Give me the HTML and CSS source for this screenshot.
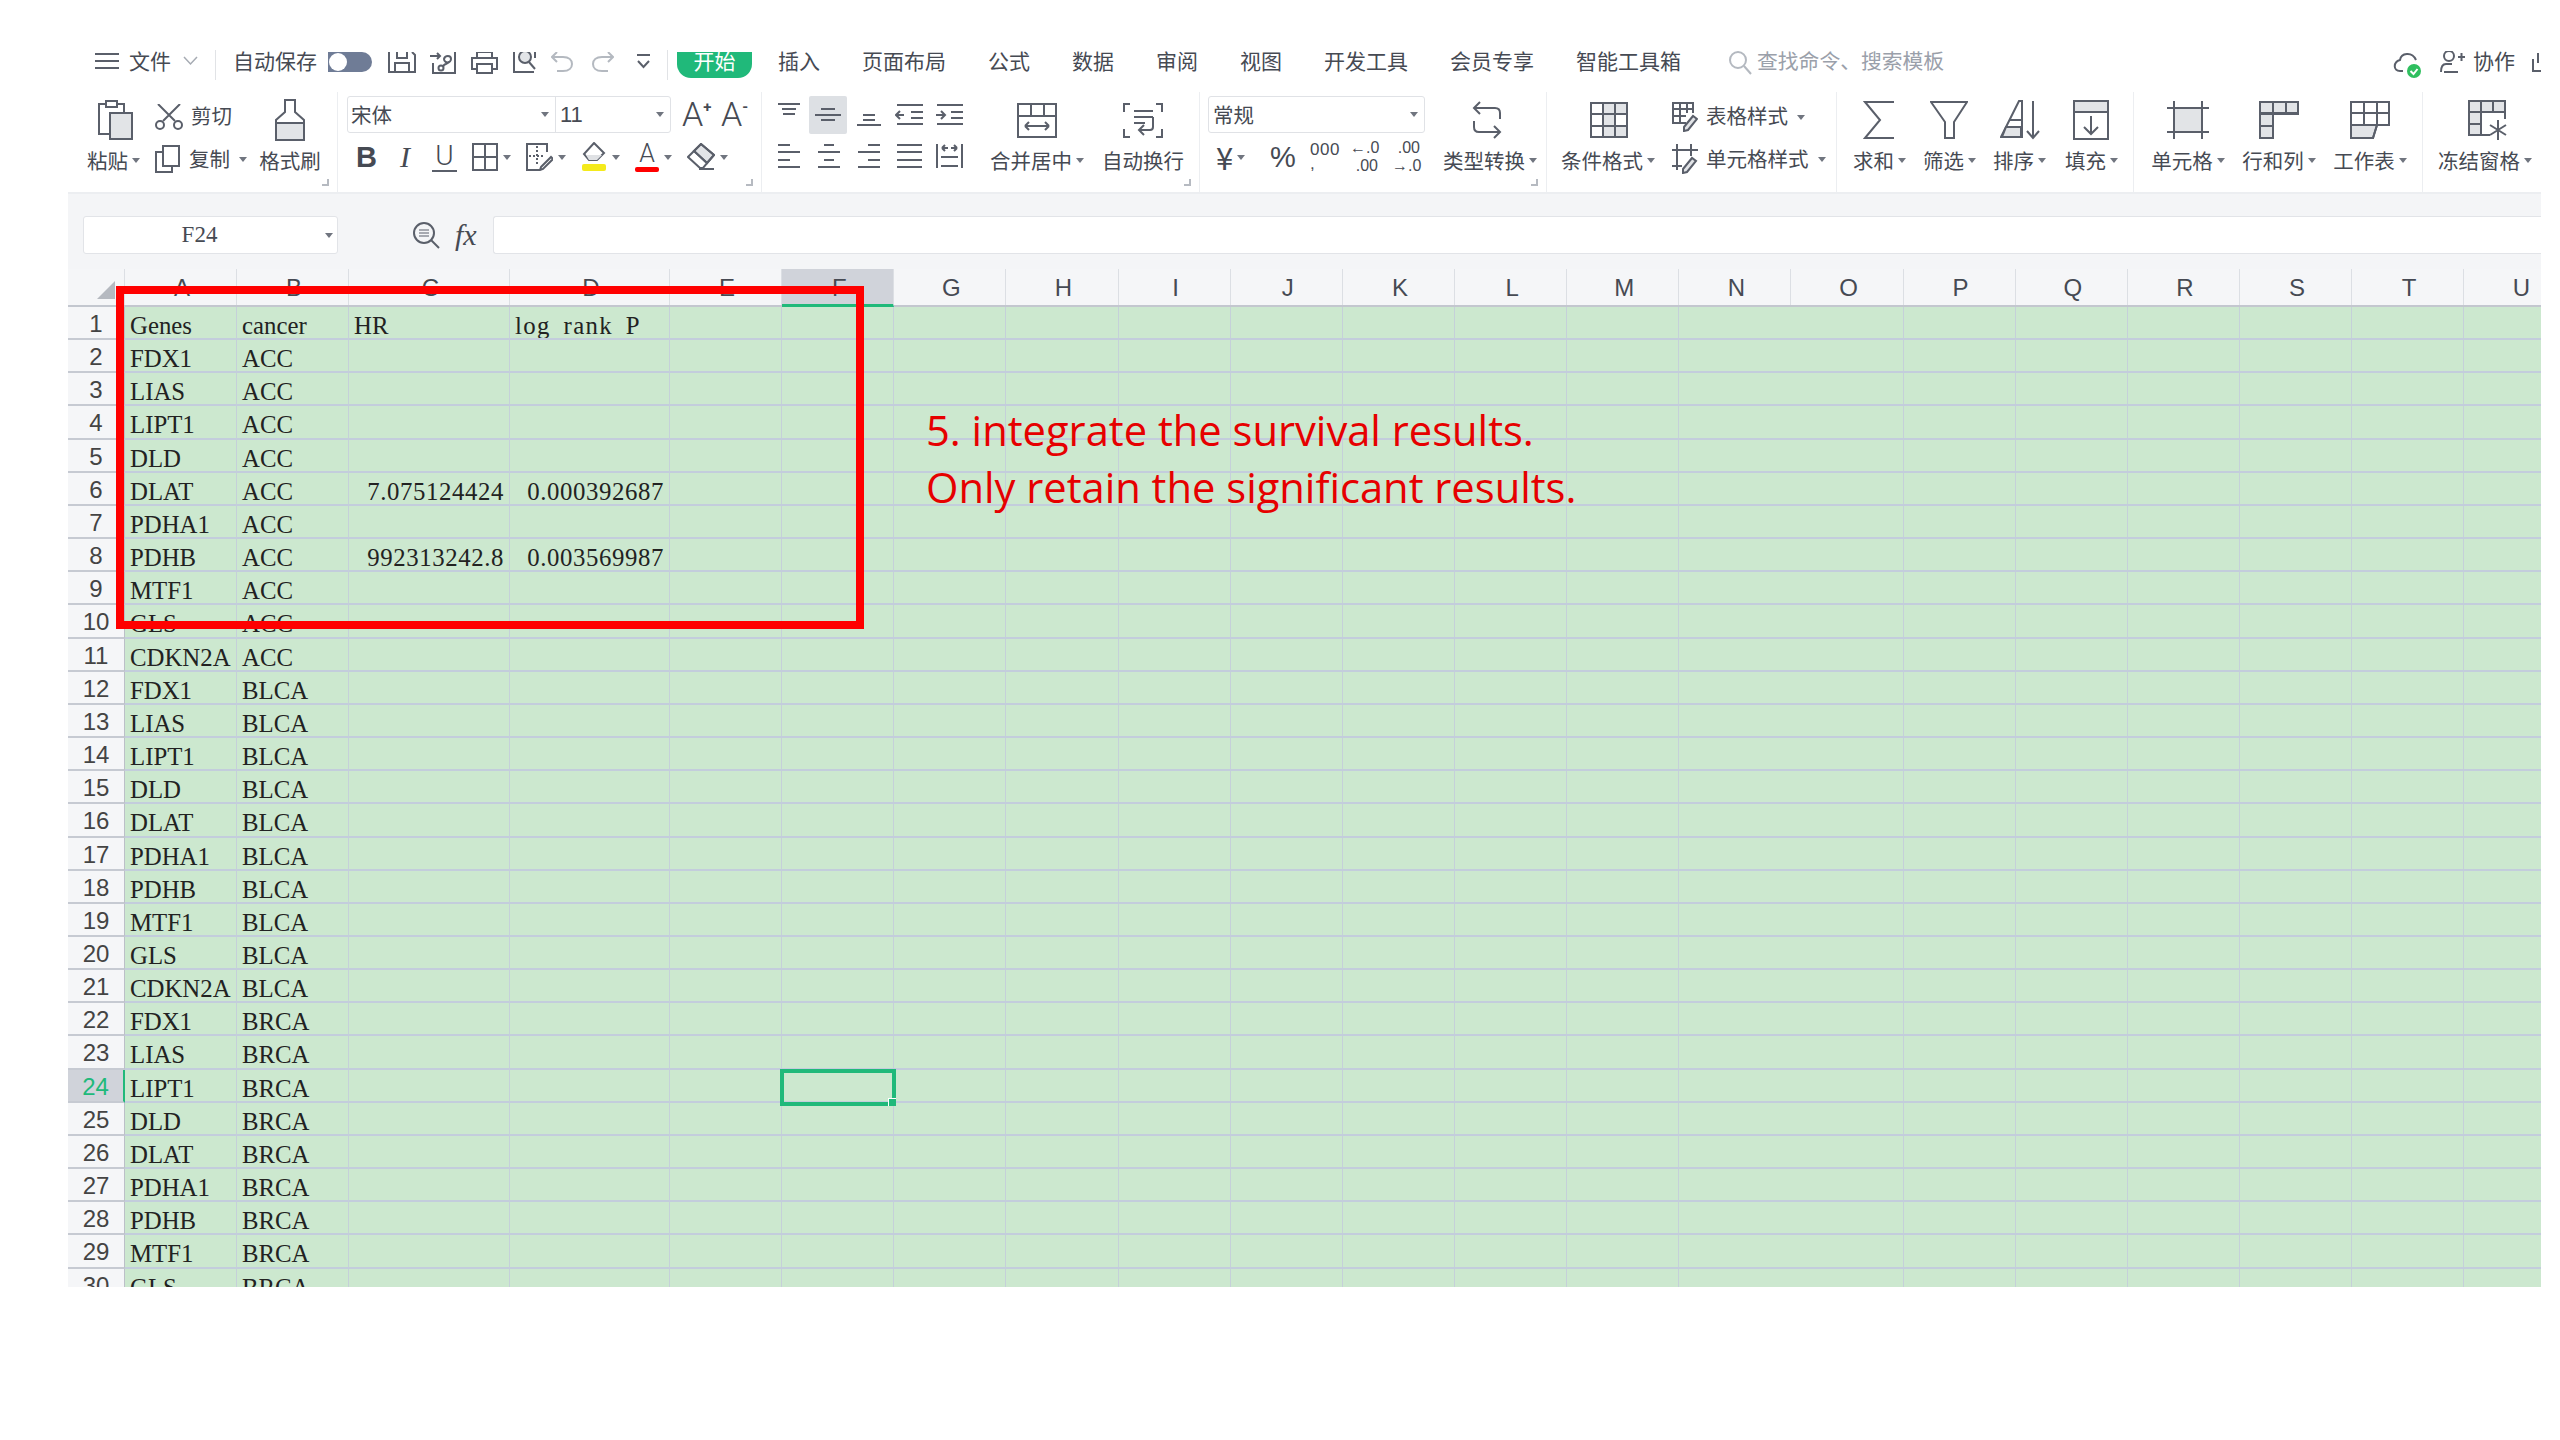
FILE: index.html
```html
<!DOCTYPE html>
<html lang="zh-CN">
<head>
  <meta charset="UTF-8">
  <title>WPS 表格</title>
  <link rel="stylesheet" href="styles.css">
</head>
<body>
<div class="app">

  <!-- Tab bar -->
  <div class="tabbar">
    <div class="file-menu">
      <svg class="ico" width="24" height="20" viewBox="0 0 24 20"><path d="M0 3h24M0 10h24M0 17h24"/></svg>
      <span>文件</span>
      <svg class="ico thin" width="15" height="20" viewBox="0 0 15 20"><path d="M1 6l6.500 7L14 6"/></svg>
    </div>
    <div class="quick">
      <span>自动保存</span>
      <div class="toggle"><i></i></div>
      <svg class="ico" width="28" height="22" viewBox="0 0 28 22"><path d="M1 0v20h26V3l-3-3M9 0v6h10V0M7 20V11h14v9"/></svg>
      <svg class="ico" width="27" height="22" viewBox="0 0 27 22"><path d="M0 4h10M7 1l3 3-3 3M3 11v10h22V0M13 15c0-4 8-3 8-8 0-4-6-4-7 0 0 3 3 4 5 3"/><circle cx="11" cy="16" r="2.500"/></svg>
      <svg class="ico" width="27" height="22" viewBox="0 0 27 22"><path d="M6 6V0h15v6M6 17H1V6h25v11h-5M6 12h15v9H6z"/></svg>
      <svg class="ico" width="25" height="22" viewBox="0 0 25 22"><path d="M2 0v20h20M23 0v6"/><circle class="f" cx="13" cy="5" r="6"/><path d="M17 10l6 7"/></svg>
      <svg class="ico pale" width="23" height="22" viewBox="0 0 23 22"><path d="M6 0L1 5l5 5M1 5h11c6 0 9 3 9 7s-3 7-9 7H6"/></svg>
      <svg class="ico pale redo" width="23" height="22" viewBox="0 0 23 22"><path d="M17 0l5 5-5 5M22 5H11C5 5 2 8 2 12s3 7 9 7h6"/></svg>
      <svg class="ico more" width="15" height="22" viewBox="0 0 15 22"><path d="M1 3h13M2 9l5.500 6L13 9"/></svg>
    </div>
    <div class="tabs">
      <span class="tab-active">开始</span>
      <span>插入</span>
      <span>页面布局</span>
      <span>公式</span>
      <span>数据</span>
      <span>审阅</span>
      <span>视图</span>
      <span>开发工具</span>
      <span>会员专享</span>
      <span>智能工具箱</span>
    </div>
    <div class="search">
      <svg class="ico pale" width="24" height="24" viewBox="0 0 24 24"><circle cx="10" cy="9" r="8"/><path d="M16 15l7 8"/></svg>
      <span>查找命令、搜索模板</span>
    </div>
    <div class="tab-right">
      <svg width="32" height="28" viewBox="0 0 32 28"><path class="ln" d="M10 20H7c-7 0-7-9 0-11 1-7 12-9 16 0"/><circle cx="21" cy="20" r="7" fill="#2fbf5f"/><path d="M17.500 20l3 3 4-5" fill="none" stroke="#fff" stroke-width="2"/></svg>
      <svg class="ico" width="25" height="22" viewBox="0 0 25 22"><circle cx="9" cy="5" r="5"/><path d="M1 21c0-5 2-8 5-8h6M18 6h7M21.500 2v8M4 21h14"/></svg>
      <span>协作</span>
      <svg class="ico cut-ico" width="17" height="22" viewBox="0 0 17 22"><path d="M1 8v12h14M6 2v10"/></svg>
    </div>
  </div>

  <!-- Ribbon -->
  <div class="ribbon">

    <div class="group g-clip">
      <div class="tool w-54">
        <div class="tool-ico"><svg class="ico" width="36" height="40" viewBox="0 0 36 40"><path d="M8 4H1v30h10M19 4h7v8"/><path d="M8 1h11v6H8z"/><rect class="f" x="12" y="13" width="22" height="26"/></svg></div>
        <div class="tool-label">粘贴<b class="caret"></b></div>
      </div>
      <div class="small-col">
        <div class="small-tool">
          <svg class="ico" width="28" height="26" viewBox="0 0 28 26"><path d="M3 0l17 17M25 0L8 17"/><circle cx="5" cy="21" r="4"/><circle cx="23" cy="21" r="4"/></svg>
          <span>剪切</span>
        </div>
        <div class="small-tool">
          <svg class="ico" width="26" height="28" viewBox="0 0 26 28"><path d="M7 7H1v20h16v-6"/><rect x="8" y="1" width="16" height="20"/></svg>
          <span>复制</span><b class="caret"></b>
        </div>
      </div>
      <div class="tool w-62">
        <div class="tool-ico"><svg class="ico" width="32" height="42" viewBox="0 0 32 42"><path class="f" d="M2 24h28v17H2z"/><path d="M11 1h10v12l9 8v20H2V21l9-8z"/></svg></div>
        <div class="tool-label">格式刷</div>
      </div>
      <i class="corner"></i>
    </div>

    <div class="group g-font">
      <div class="font-col">
        <div class="font-top">
          <div class="select font-select">
            <div class="sel-part sel-name">宋体<b class="caret"></b></div>
            <div class="sel-part sel-size">11<b class="caret"></b></div>
          </div>
          <span class="size-a">A<sup>+</sup></span>
          <span class="size-a">A<sup>-</sup></span>
        </div>
        <div class="fmt-row">
          <span class="fmt-b">B</span>
          <span class="fmt-i">I</span>
          <span class="fmt-u">U</span>
          <div class="fmt-item">
            <svg class="ico" width="26" height="28" viewBox="0 0 26 28"><path d="M1 1h24v26H1zM13 1v26M1 14h24"/></svg><b class="caret"></b>
          </div>
          <div class="fmt-item">
            <svg class="ico" width="27" height="28" viewBox="0 0 27 28"><path d="M21 9V1H1v26h13"/><path stroke-dasharray="2 2" d="M11 3v20M3 13h15"/><path d="M15 24l10-10 2 2-10 10-3 1z"/></svg><b class="caret"></b>
          </div>
          <div class="fmt-item">
            <svg width="26" height="30" viewBox="0 0 26 30"><path class="ln" d="M13 1l10 10-7 7H8l-5-6z"/><path d="M5 13h16l-5 5H8z" fill="#dfe1e4"/><rect x="1" y="22" width="24" height="7" rx="2" fill="#f4ea1c"/></svg><b class="caret"></b>
          </div>
          <div class="fmt-item">
            <div class="fmt-color">A<i></i></div><b class="caret"></b>
          </div>
          <div class="fmt-item">
            <svg class="ico" width="28" height="28" viewBox="0 0 28 28"><path class="f" d="M14 1l13 11-7 8L7 8z"/><path d="M14 1l13 11-11 13h-3L1 14zM7 8l13 12M12 26h15"/></svg><b class="caret"></b>
          </div>
        </div>
      </div>
      <i class="corner"></i>
    </div>

    <div class="group g-align">
      <div class="align-grid">
        <div class="align-btn"><svg class="ico" width="24" height="24" viewBox="0 0 24 24"><path d="M1 1h22M5 6h14M6 11h12"/></svg></div>
        <div class="align-btn on"><svg class="ico" width="28" height="24" viewBox="0 0 28 24"><path d="M7 6h14M1 12h26M7 17h14"/></svg></div>
        <div class="align-btn"><svg class="ico" width="24" height="24" viewBox="0 0 24 24"><path d="M6 12h12M6 17h12M0 22h24"/></svg></div>
        <div class="align-btn"><svg class="ico" width="28" height="24" viewBox="0 0 28 24"><path d="M2 2h26M16 9h12M16 15h12M2 21h26M9 12H1M5 8l-4 4 4 4"/></svg></div>
        <div class="align-btn"><svg class="ico" width="28" height="24" viewBox="0 0 28 24"><path d="M2 2h26M16 9h12M16 15h12M2 21h26M1 12h9M6 8l4 4-4 4"/></svg></div>
        <div class="align-btn"><svg class="ico" width="24" height="24" viewBox="0 0 24 24"><path d="M1 1h12M1 8h22M1 16h12M1 23h22"/></svg></div>
        <div class="align-btn"><svg class="ico" width="24" height="24" viewBox="0 0 24 24"><path d="M7 1h10M1 8h22M7 16h10M1 23h22"/></svg></div>
        <div class="align-btn"><svg class="ico" width="24" height="24" viewBox="0 0 24 24"><path d="M11 1h12M1 8h22M11 16h12M1 23h22"/></svg></div>
        <div class="align-btn"><svg class="ico" width="25" height="24" viewBox="0 0 25 24"><path d="M0 1h25M0 8h25M0 16h25M0 23h25"/></svg></div>
        <div class="align-btn"><svg class="ico" width="27" height="24" viewBox="0 0 27 24"><path d="M1 0v24M26 0v24M5 13h17M5 22h17M6 4h6M6 4l3-3M6 4l3 3M21 4h-6M21 4l-3-3M21 4l-3 3"/></svg></div>
      </div>
      <div class="tool w-98">
        <div class="tool-ico"><svg class="ico" width="40" height="35" viewBox="0 0 40 35"><path d="M1 1h38v33H1zM1 13h38M14 1v12M27 1v12M8 23h24M8 23l4-4M8 23l4 4M32 23l-4-4M32 23l-4 4"/></svg></div>
        <div class="tool-label">合并居中<b class="caret"></b></div>
      </div>
      <div class="tool w-84">
        <div class="tool-ico"><svg class="ico" width="40" height="35" viewBox="0 0 40 35"><path d="M7 1H1v8M33 1h6v8M1 26v8h6M39 26v8h-6M11 8h19M11 14h19M11 20h11M30 14v10a3 3 0 0 1-3 3H17M21 22l-5 5 5 5"/></svg></div>
        <div class="tool-label">自动换行</div>
      </div>
      <i class="corner"></i>
    </div>

    <div class="group g-number">
      <div class="num-col">
        <div class="select num-select">常规<b class="caret"></b></div>
        <div class="num-row">
          <div class="num-yen"><span>¥</span><b class="caret"></b></div>
          <span class="num-pct">%</span>
          <div class="num-thou">000<br>,</div>
          <div class="num-stack">←.0<br>.00</div>
          <div class="num-stack">.00<br>→.0</div>
        </div>
      </div>
      <div class="tool w-98">
        <div class="tool-ico loop"><svg class="ico" width="32" height="38" viewBox="0 0 32 38"><path d="M9 1L3 7l6 6M3 7h21c3 0 5 2 5 5v6M23 25l6 6-6 6M29 31H8c-3 0-5-2-5-5v-6"/></svg></div>
        <div class="tool-label">类型转换<b class="caret"></b></div>
      </div>
      <i class="corner"></i>
    </div>

    <div class="group g-style">
      <div class="tool w-99">
        <div class="tool-ico"><svg class="ico" width="38" height="36" viewBox="0 0 38 36"><path class="f" d="M13 1h24v11H13zM13 12h12v12H13zM13 24h24v11H13z"/><path d="M1 1h36v34H1zM1 12h36M1 24h36M13 1v34M25 1v11M25 24v11"/></svg></div>
        <div class="tool-label">条件格式<b class="caret"></b></div>
      </div>
      <div class="small-col style-col">
        <div class="small-tool">
          <svg class="ico" width="26" height="30" viewBox="0 0 26 30"><path d="M14 21H1V1h20v10M1 7h20M8 1v20M15 1v10M1 14h13"/><path class="f" d="M12 25l9-11 4 3-9 11-4 1z"/></svg>
          <span>表格样式</span><b class="caret"></b>
        </div>
        <div class="small-tool">
          <svg class="ico" width="26" height="30" viewBox="0 0 26 30"><path d="M5 0v26M0 6h26M19 0v12M0 22h10"/><path class="f" d="M11 25l9-11 4 3-9 11-4 1z"/></svg>
          <span>单元格样式</span><b class="caret"></b>
        </div>
      </div>
    </div>

    <div class="group g-edit">
      <div class="tool w-57">
        <div class="tool-ico"><svg class="ico" width="32" height="38" viewBox="0 0 32 38"><path d="M31 1H2l15 18L2 37h29"/></svg></div>
        <div class="tool-label">求和<b class="caret"></b></div>
      </div>
      <div class="tool w-57">
        <div class="tool-ico"><svg class="ico" width="38" height="38" viewBox="0 0 38 38"><path d="M1 1h36L24 21v16h-9V21z"/></svg></div>
        <div class="tool-label">筛选<b class="caret"></b></div>
      </div>
      <div class="tool w-57 sort">
        <div class="tool-ico"><svg class="ico" width="42" height="40" viewBox="0 0 42 40"><path d="M1 37L19 1h3v36zM10 20h12"/><path class="f" d="M6 27h15v10H2z"/><path d="M33 1v37M27 31l6 7 6-7"/></svg></div>
        <div class="tool-label">排序<b class="caret"></b></div>
      </div>
      <div class="tool w-57">
        <div class="tool-ico"><svg class="ico" width="36" height="40" viewBox="0 0 36 40"><path class="f" d="M1 1h34v11H1z"/><path d="M1 1h34v38H1zM18 16v18M11 27l7 7 7-7"/></svg></div>
        <div class="tool-label">填充<b class="caret"></b></div>
      </div>
    </div>

    <div class="group g-cells">
      <div class="tool w-78">
        <div class="tool-ico"><svg class="ico" width="42" height="38" viewBox="0 0 42 38"><rect class="f" x="7" y="7" width="28" height="24"/><path d="M0 7h42M0 31h42M7 0v38M35 0v38"/></svg></div>
        <div class="tool-label">单元格<b class="caret"></b></div>
      </div>
      <div class="tool w-76">
        <div class="tool-ico"><svg class="ico" width="40" height="38" viewBox="0 0 40 38"><path class="f" d="M1 1h38v11H1zM1 12h13v25H1z"/><path d="M1 1h38v12H14v24H1zM1 13h13M1 25h13M14 1v12M27 1v12"/></svg></div>
        <div class="tool-label">行和列<b class="caret"></b></div>
      </div>
      <div class="tool w-78">
        <div class="tool-ico"><svg class="ico" width="40" height="38" viewBox="0 0 40 38"><path class="f" d="M1 24h26l-4 13H1z"/><path d="M1 1h38v23H27l-4 13H1zM1 12h38M1 24h26M14 1v23M27 1v23"/></svg></div>
        <div class="tool-label">工作表<b class="caret"></b></div>
      </div>
    </div>

    <div class="group g-freeze">
      <div class="tool w-99">
        <div class="tool-ico"><svg class="ico" width="40" height="40" viewBox="0 0 40 40"><path class="f" d="M1 1h36v11H1zM1 12h12v23H1z"/><path d="M22 35H1V1h36v18M1 12h36M1 24h12M13 1v34M25 1v11"/><path d="M30 20v20M22 25l16 10M38 25L22 35"/></svg></div>
        <div class="tool-label">冻结窗格<b class="caret"></b></div>
      </div>
    </div>
  </div>

  <!-- Formula bar -->
  <div class="formula-bar">
    <div class="name-box">F24<b class="caret"></b></div>
    <svg class="ico" width="28" height="28" viewBox="0 0 28 28"><circle cx="12" cy="12" r="10"/><path d="M7 9h10M7 12h10M7 15h10" stroke-width="1"/><path d="M19 19l8 8"/></svg>
    <span class="fx">fx</span>
    <div class="formula-input"></div>
  </div>

  <!-- Sheet -->
  <div class="sheet">
    <div class="col-head">
      <div class="corner-cell"><i></i></div>
      <div class="c-a">A</div>
      <div class="c-b">B</div>
      <div class="c-c">C</div>
      <div class="c-d">D</div>
      <div class="c-n">E</div>
      <div class="c-n sel">F</div>
      <div class="c-n">G</div>
      <div class="c-n">H</div>
      <div class="c-n">I</div>
      <div class="c-n">J</div>
      <div class="c-n">K</div>
      <div class="c-n">L</div>
      <div class="c-n">M</div>
      <div class="c-n">N</div>
      <div class="c-n">O</div>
      <div class="c-n">P</div>
      <div class="c-n">Q</div>
      <div class="c-n">R</div>
      <div class="c-n">S</div>
      <div class="c-n">T</div>
      <div class="c-n">U</div>
    </div>
    <div class="rows">
      <div class="row"><div class="rh">1</div><div>Genes</div><div>cancer</div><div>HR</div><div class="spaced">log rank P</div><div class="rest"></div></div>
      <div class="row"><div class="rh">2</div><div>FDX1</div><div>ACC</div><div></div><div></div><div class="rest"></div></div>
      <div class="row"><div class="rh">3</div><div>LIAS</div><div>ACC</div><div></div><div></div><div class="rest"></div></div>
      <div class="row"><div class="rh">4</div><div>LIPT1</div><div>ACC</div><div></div><div></div><div class="rest"></div></div>
      <div class="row"><div class="rh">5</div><div>DLD</div><div>ACC</div><div></div><div></div><div class="rest"></div></div>
      <div class="row"><div class="rh">6</div><div>DLAT</div><div>ACC</div><div class="num">7.075124424</div><div class="num">0.000392687</div><div class="rest"></div></div>
      <div class="row"><div class="rh">7</div><div>PDHA1</div><div>ACC</div><div></div><div></div><div class="rest"></div></div>
      <div class="row"><div class="rh">8</div><div>PDHB</div><div>ACC</div><div class="num">992313242.8</div><div class="num">0.003569987</div><div class="rest"></div></div>
      <div class="row"><div class="rh">9</div><div>MTF1</div><div>ACC</div><div></div><div></div><div class="rest"></div></div>
      <div class="row"><div class="rh">10</div><div>GLS</div><div>ACC</div><div></div><div></div><div class="rest"></div></div>
      <div class="row"><div class="rh">11</div><div>CDKN2A</div><div>ACC</div><div></div><div></div><div class="rest"></div></div>
      <div class="row"><div class="rh">12</div><div>FDX1</div><div>BLCA</div><div></div><div></div><div class="rest"></div></div>
      <div class="row"><div class="rh">13</div><div>LIAS</div><div>BLCA</div><div></div><div></div><div class="rest"></div></div>
      <div class="row"><div class="rh">14</div><div>LIPT1</div><div>BLCA</div><div></div><div></div><div class="rest"></div></div>
      <div class="row"><div class="rh">15</div><div>DLD</div><div>BLCA</div><div></div><div></div><div class="rest"></div></div>
      <div class="row"><div class="rh">16</div><div>DLAT</div><div>BLCA</div><div></div><div></div><div class="rest"></div></div>
      <div class="row"><div class="rh">17</div><div>PDHA1</div><div>BLCA</div><div></div><div></div><div class="rest"></div></div>
      <div class="row"><div class="rh">18</div><div>PDHB</div><div>BLCA</div><div></div><div></div><div class="rest"></div></div>
      <div class="row"><div class="rh">19</div><div>MTF1</div><div>BLCA</div><div></div><div></div><div class="rest"></div></div>
      <div class="row"><div class="rh">20</div><div>GLS</div><div>BLCA</div><div></div><div></div><div class="rest"></div></div>
      <div class="row"><div class="rh">21</div><div>CDKN2A</div><div>BLCA</div><div></div><div></div><div class="rest"></div></div>
      <div class="row"><div class="rh">22</div><div>FDX1</div><div>BRCA</div><div></div><div></div><div class="rest"></div></div>
      <div class="row"><div class="rh">23</div><div>LIAS</div><div>BRCA</div><div></div><div></div><div class="rest"></div></div>
      <div class="row"><div class="rh sel">24</div><div>LIPT1</div><div>BRCA</div><div></div><div></div><div class="rest"></div></div>
      <div class="row"><div class="rh">25</div><div>DLD</div><div>BRCA</div><div></div><div></div><div class="rest"></div></div>
      <div class="row"><div class="rh">26</div><div>DLAT</div><div>BRCA</div><div></div><div></div><div class="rest"></div></div>
      <div class="row"><div class="rh">27</div><div>PDHA1</div><div>BRCA</div><div></div><div></div><div class="rest"></div></div>
      <div class="row"><div class="rh">28</div><div>PDHB</div><div>BRCA</div><div></div><div></div><div class="rest"></div></div>
      <div class="row"><div class="rh">29</div><div>MTF1</div><div>BRCA</div><div></div><div></div><div class="rest"></div></div>
      <div class="row"><div class="rh">30</div><div>GLS</div><div>BRCA</div><div></div><div></div><div class="rest"></div></div>
    </div>
    <div class="cell-cursor"><i></i></div>
  </div>

  <!-- Annotation over the sheet -->
  <div class="red-box"></div>
  <div class="note">5. integrate the survival results.<br>Only retain the significant results.</div>
</div>
</body>
</html>
```

FILE: styles.css
```css
/* General */
body {
  margin: 0;
  background: #fff;
  font-family: "Noto Sans CJK SC", "Liberation Sans", sans-serif;
  color: #464a53;
}

.app {
  position: relative;
  width: 2473px;
  height: 1247px;
  margin: 40px 0 0 68px;
  overflow: hidden;
}

.ico {
  fill: none;
  stroke: #5a5f6a;
  stroke-width: 2;
  flex: none;
}
.ico.thin { stroke: #a6abb3; stroke-width: 1.5; }
.ico.pale { stroke: #b4b9c0; }
.ico .f { fill: #e2e4e7; }
.ln { fill: none; stroke: #5a5f6a; stroke-width: 2; }

.caret {
  display: inline-block;
  flex: none;
  width: 0;
  height: 0;
  margin-left: 5px;
  vertical-align: middle;
  border: 4px solid transparent;
  border-top: 5px solid #70757f;
  border-bottom: 0;
}

/* Tab bar */
.tabbar {
  display: flex;
  align-items: flex-start;
  height: 40px;
  padding: 10px 0 0 27px;
  box-sizing: border-box;
  font-size: 21px;
  line-height: 20px;
}

.file-menu {
  display: flex;
  align-items: flex-start;
  gap: 10px;
  width: 121px;
  height: 30px;
  flex: none;
  box-sizing: border-box;
  border-right: 1px solid #e1e3e6;
}
.file-menu .ico { margin-top: 1px; }
.file-menu .thin { margin-left: 2px; }

.quick {
  display: flex;
  align-items: flex-start;
  width: 452px;
  height: 30px;
  flex: none;
  gap: 14px;
  padding-left: 17px;
  box-sizing: border-box;
  border-right: 1px solid #e1e3e6;
}
.quick .ico { margin-top: 2px; }
.quick .redo { margin-left: 3px; }
.quick .more { margin-left: 8px; }

.toggle {
  position: relative;
  width: 44px;
  height: 20px;
  margin: 2px 2px 0 -3px;
  border-radius: 0 10px 10px 0;
  background: #6f7c96;
}
.toggle i {
  position: absolute;
  left: 1px;
  top: 1px;
  width: 18px;
  height: 18px;
  border-radius: 50%;
  background: #fff;
}

.tabs {
  display: flex;
  gap: 42px;
  margin-left: 9px;
}
.tab-active {
  width: 75px;
  height: 26px;
  margin: 2px -16px 0 0;
  border-radius: 0 0 14px 14px;
  background: #20b97a;
  color: #fff;
  line-height: 16px;
  text-align: center;
}

.search {
  display: flex;
  gap: 5px;
  margin-left: 47px;
  color: #9aa0aa;
  font-size: 20.800px;
}
.search .ico { margin-top: 1px; }

.tab-right {
  display: flex;
  align-items: flex-start;
  margin-left: auto;
  gap: 8px;
  margin-right: -8px;
}
.tab-right svg:first-child { margin-right: 7px; margin-top: 1px; }
.tab-right svg { margin-top: 1px; }
.cut-ico { margin-left: 9px; }

/* Ribbon */
.ribbon {
  display: flex;
  height: 114px;
  padding-top: 12px;
  box-sizing: border-box;
  border-bottom: 2px solid #eceef1;
  font-size: 20.500px;
}

.group {
  position: relative;
  display: flex;
  height: 100px;
  padding-top: 4px;
  box-sizing: border-box;
  border-right: 1px solid #eceef1;
  flex: none;
}
.g-clip { width: 270px; padding-left: 19px; gap: 14px; }
.g-font { width: 424px; padding-left: 9px; }
.g-align { width: 438px; padding-left: 7px; gap: 13px; }
.g-number { width: 347px; padding-left: 8px; }
.g-style { width: 290px; padding-left: 14px; gap: 12px; }
.g-edit { width: 297px; padding-left: 16px; gap: 13px; }
.g-cells { width: 289px; padding-left: 15px; gap: 14px; }
.g-freeze { border-right: 0; padding-left: 15px; }

.corner {
  position: absolute;
  right: 8px;
  bottom: 6px;
  width: 5px;
  height: 5px;
  border-right: 2px solid #b6bac1;
  border-bottom: 2px solid #b6bac1;
}

.tool {
  display: flex;
  flex-direction: column;
  align-items: center;
  flex: none;
}
.tool-ico {
  display: flex;
  align-items: center;
  justify-content: center;
  height: 48px;
}
.tool-label {
  display: flex;
  align-items: center;
  height: 32px;
  white-space: nowrap;
  line-height: 32px;
}
.tool-label .caret { margin-left: 4px; }
.w-54 { width: 54px; align-items: flex-start; }
.w-54 .tool-ico { margin-left: 11px; }
.w-57 { width: 57px; align-items: flex-start; }
.w-57 .tool-ico { width: 52px; }
.sort .tool-ico { width: 56px; }
.sort { margin-right: 2px; }
.w-62 { width: 62px; }
.w-76 { width: 76px; }
.w-78 { width: 78px; }
.w-84 { width: 84px; }
.w-98 { width: 98px; align-items: flex-start; }
.w-98 .tool-ico { width: 94px; }
.w-98 .loop { width: 88px; }
.w-99 { width: 99px; align-items: flex-start; }
.w-99 .tool-ico { width: 96px; }
.g-freeze .w-99 .tool-ico { width: 100px; }

.small-col {
  display: flex;
  flex-direction: column;
  width: 90px;
  flex: none;
}
.small-tool {
  display: flex;
  align-items: center;
  gap: 8px;
  height: 42px;
  white-space: nowrap;
}
.small-tool span { margin-top: -2px; }
.small-tool:first-child span { margin-top: -4px; }
.small-tool .caret { margin-left: 1px; }
.style-col { width: 154px; }

/* Font group */
.font-col { display: flex; flex-direction: column; gap: 7px; }
.font-top { display: flex; align-items: center; gap: 11px; }

.select {
  display: flex;
  height: 37px;
  box-sizing: border-box;
  border: 1px solid #e0e2e6;
  border-radius: 3px;
  background: #fff;
  flex: none;
}
.font-select { width: 324px; }
.sel-part {
  display: flex;
  align-items: center;
  justify-content: space-between;
  padding: 0 6px 0 3px;
  box-sizing: border-box;
  line-height: 35px;
}
.sel-name { width: 208px; border-right: 1px solid #e0e2e6; }
.sel-size { flex: 1; padding-left: 4px; font-family: "Liberation Sans", sans-serif; font-size: 22px; }

.size-a {
  width: 28px;
  font-family: Roboto, "Liberation Sans", sans-serif;
  font-size: 34px;
  font-weight: 300;
  line-height: 37px;
  white-space: nowrap;
}
.size-a sup { font-size: 15px; line-height: 0; font-weight: 700; vertical-align: 14px; }

.fmt-row {
  display: flex;
  align-items: center;
  gap: 15px;
  height: 34px;
  padding-left: 9px;
}
.fmt-item { display: flex; align-items: center; }
.fmt-b {
  width: 20px;
  font-family: "Liberation Sans", sans-serif;
  font-size: 29px;
  font-weight: 700;
}
.fmt-i {
  width: 26px;
  padding-left: 9px;
  box-sizing: border-box;
  font-family: "Liberation Serif", serif;
  font-size: 30px;
  font-style: italic;
}
.fmt-u {
  width: 25px;
  height: 30px;
  box-sizing: border-box;
  border-bottom: 2px solid #5a5f6a;
  font-family: Roboto, "Liberation Sans", sans-serif;
  font-size: 28px;
  font-weight: 300;
  line-height: 27px;
  text-align: center;
}
.fmt-color {
  width: 24px;
  font-family: Roboto, "Liberation Sans", sans-serif;
  font-size: 25px;
  font-weight: 300;
  line-height: 24px;
  text-align: center;
}
.fmt-color i { display: block; height: 5px; margin-top: 1px; border-radius: 2px; background: #f00; }

/* Alignment group */
.align-grid {
  display: grid;
  grid-template-columns: repeat(5, 40px);
  grid-template-rows: 38px 38px;
  row-gap: 3px;
  width: 200px;
  margin-right: 8px;
  flex: none;
}
.align-btn {
  display: flex;
  align-items: center;
  justify-content: center;
}
.align-btn.on { width: 38px; height: 38px; background: #dde0e4; border-radius: 2px; }

/* Number group */
.num-col { display: flex; flex-direction: column; gap: 4px; margin-right: 9px; }
.num-select {
  width: 217px;
  align-items: center;
  justify-content: space-between;
  padding: 0 6px 0 4px;
  line-height: 35px;
}
.num-row {
  display: flex;
  align-items: center;
  height: 40px;
  padding-left: 8px;
  font-family: "Liberation Sans", sans-serif;
}
.num-yen { display: flex; align-items: center; width: 54px; font-family: "Noto Sans CJK SC", sans-serif; font-size: 31px; line-height: 34px; }
.num-yen .caret { margin-left: 4px; }
.num-pct { width: 40px; font-size: 29px; }
.num-thou { width: 40px; font-size: 17px; line-height: 14px; letter-spacing: .5px; }
.num-stack { width: 42px; font-size: 16px; line-height: 18px; white-space: nowrap; text-align: right; padding-right: 14px; box-sizing: border-box; }

/* Formula bar */
.formula-bar {
  display: flex;
  align-items: center;
  height: 75px;
  padding: 22px 0 15px 15px;
  box-sizing: border-box;
  background: #f4f5f7;
}
.name-box {
  position: relative;
  width: 255px;
  height: 38px;
  margin-right: 74px;
  padding-right: 22px;
  box-sizing: border-box;
  border: 1px solid #e2e4e8;
  border-radius: 3px;
  background: #fff;
  font-family: "Liberation Serif", serif;
  font-size: 23px;
  line-height: 36px;
  text-align: center;
}
.name-box .caret { position: absolute; right: 4px; top: 16px; }
.fx {
  width: 38px;
  margin-left: 15px;
  font-family: "Liberation Serif", serif;
  font-size: 30px;
  font-style: italic;
  line-height: 38px;
}
.formula-input {
  flex: 1;
  height: 38px;
  box-sizing: border-box;
  border: 1px solid #e2e4e8;
  border-right: 0;
  border-radius: 3px 0 0 3px;
  background: #fff;
}

/* Sheet */
.sheet { position: relative; }

.col-head {
  display: flex;
  height: 38px;
  background: #f5f6f8;
  border-bottom: 2px solid #c3c7cf;
  box-sizing: border-box;
  font-family: "Liberation Sans", sans-serif;
  font-size: 24px;
  line-height: 38px;
  white-space: nowrap;
}
.col-head > div {
  flex: none;
  padding-left: 3px;
  box-sizing: border-box;
  border-right: 1px solid #dcdfe4;
  text-align: center;
}
.corner-cell { position: relative; width: 57px; }
.corner-cell i {
  position: absolute;
  right: 9px;
  bottom: 6px;
  border-style: solid;
  border-width: 0 0 18px 18px;
  border-color: transparent transparent #b5b9c0 transparent;
}
.c-a, .c-b { width: 112px; }
.c-c { width: 161px; }
.c-d { width: 160px; }
.c-n { width: 112.150px; }
.col-head .sel { background: #d0d3da; height: 38px; border-bottom: 3px solid #20b97a; }

.rows {
  height: 980px;
  overflow: hidden;
}
.row {
  display: grid;
  grid-template-columns: 57px 112px 112px 161px 160px 1fr;
  height: 33.170px;
  background: #cce8cf;
  font-family: "Liberation Serif", serif;
  font-size: 24.800px;
  line-height: 38px;
  color: #222;
}
.row > div {
  box-sizing: border-box;
  padding-left: 5px;
  border-right: 1px solid #c5d0d9;
  border-bottom: 2px solid #c3cddc;
  white-space: nowrap;
  overflow: hidden;
}
.row > .rh {
  padding: 0;
  background: #f5f6f8;
  border-right: 1px solid #bcc0c8;
  border-bottom: 2px solid #c6cad2;
  font-family: "Liberation Sans", sans-serif;
  font-size: 24px;
  line-height: 33px;
  text-align: center;
  color: #444;
}
.row > .rh.sel { background: #d0d3da; color: #20b97a; border-right: 2px solid #20b97a; }
.row > .rest {
  padding: 0;
  border-right: 0;
  background: repeating-linear-gradient(90deg, transparent 0 111.150px, #c5d0d9 111.150px 112.150px);
}
.row > .num {
  padding: 0 5px 0 0;
  text-align: right;
  letter-spacing: .6px;
}
.row > .spaced { letter-spacing: 1.400px; word-spacing: 5px; }

.cell-cursor {
  position: absolute;
  left: 712px;
  top: 800px;
  width: 116px;
  height: 37px;
  box-sizing: border-box;
  border: 4px solid #20b97a;
}
.cell-cursor i {
  position: absolute;
  right: -4px;
  bottom: -4px;
  width: 7px;
  height: 7px;
  background: #20b97a;
  border-top: 1px solid #fff;
  border-left: 1px solid #fff;
}

/* Annotation */
.red-box {
  position: absolute;
  left: 48px;
  top: 246px;
  width: 748px;
  height: 343px;
  box-sizing: border-box;
  border: 8px solid #f00;
}
.note {
  position: absolute;
  left: 858px;
  top: 361px;
  font-family: "Open Sans", sans-serif;
  font-size: 41.700px;
  line-height: 57px;
  color: #e60000;
  white-space: nowrap;
}
```
